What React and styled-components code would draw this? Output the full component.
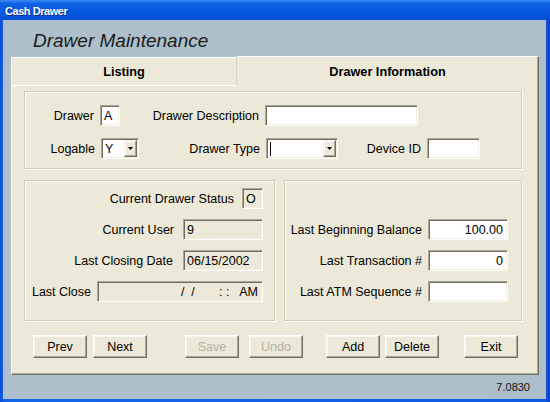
import React from "react";
import styled, { createGlobalStyle } from "styled-components";

const Global = createGlobalStyle`
  * { box-sizing: border-box; }
  html, body { margin: 0; padding: 0; background: #ffffff; }
  body { font-family: "Liberation Sans", Arial, sans-serif; }
`;

const FACE = "#ece9d8";
const DARK = "#716f64";
const MID = "#aca899";

const Window = styled.div`
  width: 550px;
  height: 402px;
  display: flex;
  flex-direction: column;
  background: linear-gradient(90deg, #0a4fd6 0%, #1466ea 1%, #0d5ce4 99%, #0a43c0 100%);
`;

const TitleBar = styled.div`
  height: 20px;
  padding: 1px 0 0 5px;
  display: flex;
  align-items: center;
  background: linear-gradient(180deg, #3b8cf6 0%, #0f63e4 18%, #0758e2 55%, #0652dc 85%, #0a4ccc 100%);
  color: #fff;
  font: bold 11px "Liberation Sans", Arial, sans-serif;
  letter-spacing: -0.45px;
  text-shadow: 1px 1px 0 #0b2f8a;
`;

const Frame = styled.div`
  flex: 1;
  margin: 0 4px 3px 3px;
  background: #adbfca;
  display: flex;
  flex-direction: column;
  padding: 0 7px 0 8px;
`;

const Heading = styled.div`
  height: 36px;
  padding: 10px 0 0 22px;
  line-height: 22px;
  font: italic 19px "Liberation Sans", Arial, sans-serif;
  color: #1b1b1b;
`;

const TabStrip = styled.div`
  display: flex;
  height: 30px;
`;

const Tab = styled.div`
  display: flex;
  align-items: center;
  justify-content: center;
  background: ${FACE};
  font: bold 12.7px "Liberation Sans", Arial, sans-serif;
  color: #000;
  border-top: 1px solid #fff;
  ${(p) =>
    p.$active
      ? `
    flex: 1;
    height: 30px;
    padding-top: 1px;
    border-right: 1px solid ${DARK};
    box-shadow: inset -1px 0 0 ${MID};
  `
      : `
    width: 226px;
    height: 29px;
    margin-top: 1px;
    border-left: 1px solid #fff;
    border-right: 1px solid #d6d3c3;
    border-bottom: 1px solid #fff;
  `}
`;

const Panel = styled.div`
  height: 289px;
  background: ${FACE};
  border-left: 1px solid #fff;
  border-right: 1px solid ${DARK};
  border-bottom: 1px solid ${DARK};
  box-shadow: inset -1px -1px 0 ${MID};
  padding: 5px 16px 16px 12px;
  display: flex;
  flex-direction: column;
  font: 12.5px "Liberation Sans", Arial, sans-serif;
  color: #000;
`;

const GroupBox = styled.div`
  border: 1px solid #cfcbb8;
  box-shadow: inset 1px 1px 0 #fff, 1px 1px 0 #fff;
  display: flex;
  flex-direction: column;
`;

const IdentityGroup = styled(GroupBox)`
  height: 78px;
  padding: 13px 0 9px 0;
  gap: 12px;
`;

const LowerGrid = styled.div`
  display: grid;
  grid-template-columns: 251px 238px;
  gap: 9px;
  height: 141px;
  margin-top: 11px;
`;

const StackGroup = styled(GroupBox)`
  justify-content: flex-end;
  gap: 10px;
  padding: 0 ${(p) => p.$pr}px 18px 0;
`;

const Row = styled.div`
  display: flex;
  align-items: center;
  height: 21px;
`;

const EndRow = styled(Row)`
  justify-content: flex-end;
  gap: ${(p) => p.$gap}px;
`;

const LabelCell = styled.span`
  width: ${(p) => p.$w}px;
  flex-shrink: 0;
  text-align: right;
  margin-right: 6px;
  white-space: nowrap;
`;

const Label = styled.span`
  white-space: nowrap;
`;

const TextBox = styled.div`
  width: ${(p) => p.$w}px;
  height: 21px;
  flex-shrink: 0;
  display: flex;
  align-items: center;
  justify-content: ${(p) => (p.$right ? "flex-end" : "flex-start")};
  padding: 1px ${(p) => (p.$right ? 4 : 3)}px 0 3px;
  background: ${(p) => (p.$disabled ? FACE : "#fff")};
  border: 1px solid;
  border-color: ${MID} #fff #fff ${MID};
  box-shadow: inset 1px 1px 0 ${DARK}, inset -1px -1px 0 #f1efe2;
  white-space: pre;
  overflow: hidden;
`;

const Select = styled.div`
  width: ${(p) => p.$w}px;
  height: 21px;
  flex-shrink: 0;
  display: flex;
  padding: 1px;
  background: #fff;
  border: 1px solid;
  border-color: ${MID} #fff #fff ${MID};
  box-shadow: inset 1px 1px 0 ${DARK}, inset -1px -1px 0 #f1efe2;
`;

const SelectValue = styled.div`
  flex: 1;
  display: flex;
  align-items: center;
  padding: 1px 0 0 2px;
`;

const Caret = styled.div`
  width: 1px;
  height: 14px;
  background: #000;
`;

const DropButton = styled.div`
  width: 13px;
  display: flex;
  align-items: center;
  justify-content: center;
  background: ${FACE};
  border: 1px solid;
  border-color: #f1efe2 ${DARK} ${DARK} #f1efe2;
  box-shadow: inset -1px -1px 0 ${MID}, inset 1px 1px 0 #fff;
`;

const ButtonRow = styled.div`
  display: flex;
  margin-top: 14px;
  padding-left: 9px;
`;

const Button = styled.button`
  width: 54px;
  height: 23px;
  margin: 0 0 0 ${(p) => p.$ml}px;
  padding: 0;
  background: ${FACE};
  border: 1px solid;
  border-color: #fff ${DARK} ${DARK} #fff;
  box-shadow: inset -1px -1px 0 ${MID}, inset 1px 1px 0 #f7f6ee;
  font: 12.5px "Liberation Sans", Arial, sans-serif;
  color: ${(p) => (p.disabled ? "#b5b2a3" : "#000")};
`;

const Footer = styled.div`
  flex: 1;
  display: flex;
  align-items: center;
  justify-content: flex-end;
  padding-right: 9px;
  font: 11px "Liberation Sans", Arial, sans-serif;
  color: #111;
`;

function DropArrow() {
  return (
    <svg width="5" height="3" viewBox="0 0 5 3">
      <polygon points="0,0 5,0 2.5,3" fill="#000" />
    </svg>
  );
}

function Combo({ w, children }) {
  return (
    <Select $w={w}>
      <SelectValue>{children}</SelectValue>
      <DropButton>
        <DropArrow />
      </DropButton>
    </Select>
  );
}

export default function App() {
  const buttons = [
    { t: "Prev", ml: 0 },
    { t: "Next", ml: 6 },
    { t: "Save", ml: 38, d: true },
    { t: "Undo", ml: 10, d: true },
    { t: "Add", ml: 23 },
    { t: "Delete", ml: 5 },
    { t: "Exit", ml: 25 },
  ];
  return (
    <>
      <Global />
      <Window>
        <TitleBar>Cash Drawer</TitleBar>
        <Frame>
          <Heading>Drawer Maintenance</Heading>
          <TabStrip>
            <Tab>Listing</Tab>
            <Tab $active>Drawer Information</Tab>
          </TabStrip>
          <Panel>
            <IdentityGroup>
              <Row>
                <LabelCell $w={69}>Drawer</LabelCell>
                <TextBox $w={20}>A</TextBox>
                <LabelCell $w={139}>Drawer Description</LabelCell>
                <TextBox $w={153} />
              </Row>
              <Row>
                <LabelCell $w={70}>Logable</LabelCell>
                <Combo w={38}>Y</Combo>
                <LabelCell $w={121}>Drawer Type</LabelCell>
                <Combo w={72}>
                  <Caret />
                </Combo>
                <LabelCell $w={83}>Device ID</LabelCell>
                <TextBox $w={53} />
              </Row>
            </IdentityGroup>
            <LowerGrid>
              <StackGroup $pr={11}>
                <EndRow $gap={8}>
                  <Label>Current Drawer Status</Label>
                  <TextBox $w={21} $disabled>O</TextBox>
                </EndRow>
                <EndRow $gap={9}>
                  <Label>Current User</Label>
                  <TextBox $w={80} $disabled>9</TextBox>
                </EndRow>
                <EndRow $gap={10}>
                  <Label>Last Closing Date</Label>
                  <TextBox $w={80} $disabled>06/15/2002</TextBox>
                </EndRow>
                <EndRow $gap={6}>
                  <Label>Last Close</Label>
                  <TextBox $w={166} $disabled $right>
                    {"/  /       : :   AM"}
                  </TextBox>
                </EndRow>
              </StackGroup>
              <StackGroup $pr={13}>
                <EndRow $gap={6}>
                  <Label>Last Beginning Balance</Label>
                  <TextBox $w={80} $right>100.00</TextBox>
                </EndRow>
                <EndRow $gap={6}>
                  <Label>Last Transaction #</Label>
                  <TextBox $w={80} $right>0</TextBox>
                </EndRow>
                <EndRow $gap={6}>
                  <Label>Last ATM Sequence #</Label>
                  <TextBox $w={80} />
                </EndRow>
              </StackGroup>
            </LowerGrid>
            <ButtonRow>
              {buttons.map((b) => (
                <Button key={b.t} $ml={b.ml} disabled={b.d}>
                  {b.t}
                </Button>
              ))}
            </ButtonRow>
          </Panel>
          <Footer>7.0830</Footer>
        </Frame>
      </Window>
    </>
  );
}
